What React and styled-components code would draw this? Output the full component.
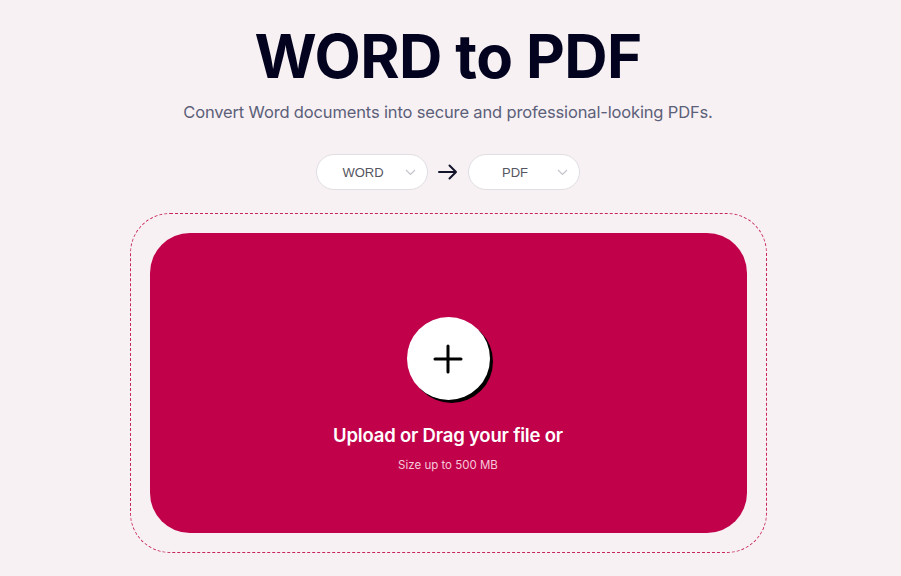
import React from 'react'
import styled, { createGlobalStyle } from 'styled-components'

const GlobalStyle = createGlobalStyle`
  html, body {
    margin: 0;
    padding: 0;
    background: #f7f1f3;
  }
  body {
    font-family: Inter, "Noto Sans", sans-serif;
  }
`

const Page = styled.main`
  display: flex;
  flex-direction: column;
  align-items: center;
  padding-top: 18px;
  padding-right: 5px;
`

const Title = styled.h1`
  margin: 0;
  font-family: Inter, sans-serif;
  font-weight: 700;
  font-size: 60px;
  line-height: 76px;
  letter-spacing: -0.6px;
  color: #03031f;
`

const Subtitle = styled.p`
  margin: 6px 0 0;
  font-size: 16.5px;
  line-height: 24px;
  color: #5c6079;
  letter-spacing: -0.15px;
`

const Formats = styled.div`
  display: flex;
  align-items: center;
  gap: 10px;
  margin-top: 30px;
`

const Select = styled.div`
  position: relative;
  width: 92px;
  height: 34px;
  border: 1px solid #e0dde4;
  border-radius: 18px;
  background: #fff;
  display: flex;
  align-items: center;
  justify-content: center;
  padding-right: 18px;
  box-sizing: content-box;
  font-family: "Liberation Sans", Arial, sans-serif;
  font-size: 13px;
  color: #55565f;
`

const Chevron = styled.svg`
  position: absolute;
  right: 11px;
  top: 14px;
`

const Arrow = styled.svg`
  display: block;
`

const DropZone = styled.section`
  margin-top: 23px;
  width: 637px;
  height: 340px;
  box-sizing: border-box;
  border: 1px dashed #c8245f;
  border-radius: 40px;
  padding: 19px;
`

const Panel = styled.div`
  height: 100%;
  background: #c1024b;
  border-radius: 40px;
  display: flex;
  flex-direction: column;
  align-items: center;
  padding-top: 84px;
  box-sizing: border-box;
`

const AddButton = styled.button`
  width: 83px;
  height: 83px;
  border-radius: 50%;
  border: none;
  background: #fff;
  box-shadow: 3px 3px 0 #000;
  display: flex;
  align-items: center;
  justify-content: center;
  padding: 0;
  cursor: pointer;
`

const UploadText = styled.div`
  margin-top: 24px;
  font-size: 18.5px;
  font-weight: 600;
  color: #fff;
  letter-spacing: -0.2px;
`

const SizeText = styled.div`
  margin-top: 12px;
  font-size: 11.5px;
  color: #f6c8d8;
`

const ChevronIcon = () => (
  <Chevron width="11" height="7" viewBox="0 0 11 7">
    <path d="M1 1l4.5 4.5L10 1" fill="none" stroke="#c4c4cc" strokeWidth="1.2" />
  </Chevron>
)

export default function App() {
  return (
    <>
      <GlobalStyle />
      <Page>
        <Title>WORD to PDF</Title>
        <Subtitle>Convert Word documents into secure and professional-looking PDFs.</Subtitle>
        <Formats>
          <Select>
            WORD
            <ChevronIcon />
          </Select>
          <Arrow width="20" height="16" viewBox="0 0 20 16">
            <path d="M1 8h17M11.5 1.5L18 8l-6.5 6.5" fill="none" stroke="#14142b" strokeWidth="2" strokeLinecap="round" strokeLinejoin="round" />
          </Arrow>
          <Select>
            PDF
            <ChevronIcon />
          </Select>
        </Formats>
        <DropZone>
          <Panel>
            <AddButton aria-label="Add file">
              <svg width="32" height="32" viewBox="0 0 32 32">
                <path d="M16 3v26M3 16h26" stroke="#000" strokeWidth="3" strokeLinecap="round" />
              </svg>
            </AddButton>
            <UploadText>Upload or Drag your file or</UploadText>
            <SizeText>Size up to 500 MB</SizeText>
          </Panel>
        </DropZone>
      </Page>
    </>
  )
}
